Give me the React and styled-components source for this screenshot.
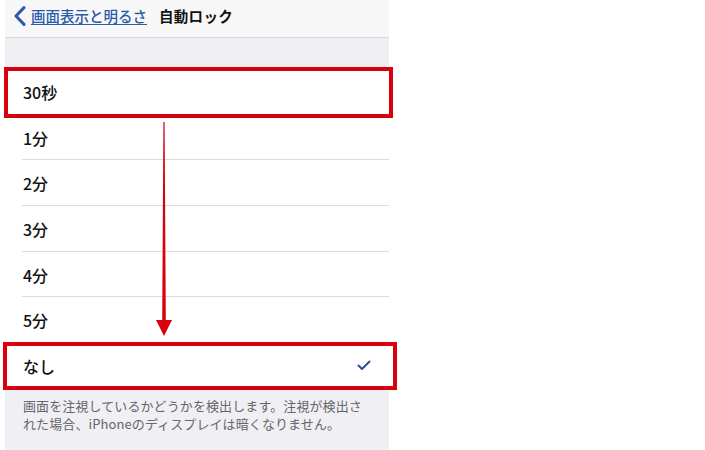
import React from "react";
import styled, { createGlobalStyle } from "styled-components";

const GlobalStyle = createGlobalStyle`
  html, body { margin: 0; padding: 0; background: #ffffff; }
  body {
    font-family: "Noto Sans CJK JP", "Noto Sans", sans-serif;
    -webkit-font-smoothing: antialiased;
  }
`;

const Page = styled.div`
  position: relative;
  width: 705px;
  height: 450px;
  overflow: hidden;
  background: #ffffff;
  padding-left: 5px;
  box-sizing: border-box;
`;

const Screen = styled.div`
  width: 384px;
  height: 450px;
  display: flex;
  flex-direction: column;
  background: #efeff4;
`;

const NavBar = styled.header`
  height: 37px;
  flex: none;
  display: flex;
  align-items: center;
  padding-left: 9px;
  background: #f7f7f7;
  border-bottom: 1px solid #d9d9dc;
`;

const BackLink = styled.a`
  display: flex;
  align-items: center;
  gap: 5px;
  color: #2a5aa8;
  font-size: 14.5px;
  font-weight: 500;
  text-decoration: none;
  margin-top: -6px;
`;

const BackLabel = styled.span`
  text-decoration: underline;
  text-underline-offset: 2px;
  text-decoration-thickness: 1px;
`;

const Title = styled.h1`
  margin: -6px 0 0 12px;
  font-size: 14.5px;
  font-weight: 700;
  color: #111;
  letter-spacing: 0.3px;
`;

const Spacer = styled.div`
  height: 31px;
  flex: none;
`;

const List = styled.ul`
  list-style: none;
  margin: 0;
  padding: 0;
  background: #ffffff;
`;

const Row = styled.li`
  height: 45.7px;
  box-sizing: border-box;
  display: flex;
  align-items: center;
  justify-content: space-between;
  padding: 0 18px 0 18px;
  font-size: 16px;
  font-weight: 500;
  color: #111;
  position: relative;
  &:not(:last-child)::after {
    content: "";
    position: absolute;
    left: 17px;
    right: 0;
    bottom: 0;
    height: 1px;
    background: #dcdcdf;
  }
`;

const Footer = styled.p`
  margin: 0;
  padding: 8px 18px 0 18px;
  font-size: 13px;
  line-height: 18px;
  color: #66666b;
  letter-spacing: 0.1px;
`;

const Highlight = styled.div`
  position: absolute;
  left: ${(p) => p.$left}px;
  top: ${(p) => p.$top}px;
  width: ${(p) => p.$width}px;
  height: ${(p) => p.$height}px;
  box-sizing: border-box;
  border: 4px solid #d8000c;
  pointer-events: none;
`;

const ArrowLayer = styled.svg`
  position: absolute;
  left: 0;
  top: 0;
  pointer-events: none;
`;

const Chevron = () => (
  <svg width="12" height="20" viewBox="0 0 12 20">
    <path
      d="M10 1.6 L2 10 L10 18.4"
      fill="none"
      stroke="#2a5aa8"
      strokeWidth="3"
      strokeLinecap="round"
      strokeLinejoin="round"
    />
  </svg>
);

const Check = () => (
  <svg width="14" height="11" viewBox="0 0 14 11">
    <path
      d="M1.5 5.5 L5 9 L12.5 1.5"
      fill="none"
      stroke="#2c4d9e"
      strokeWidth="2"
      strokeLinecap="round"
      strokeLinejoin="round"
    />
  </svg>
);

const options = ["30秒", "1分", "2分", "3分", "4分", "5分", "なし"];
const selected = "なし";

export default function App() {
  return (
    <>
      <GlobalStyle />
      <Page>
        <Screen>
          <NavBar>
            <BackLink href="#">
              <Chevron />
              <BackLabel>画面表示と明るさ</BackLabel>
            </BackLink>
            <Title>自動ロック</Title>
          </NavBar>
          <Spacer />
          <List>
            {options.map((o) => (
              <Row key={o}>
                <span>{o}</span>
                {o === selected && <Check />}
              </Row>
            ))}
          </List>
          <Footer>
            画面を注視しているかどうかを検出します。注視が検出された場合、iPhoneのディスプレイは暗くなりません。
          </Footer>
        </Screen>

        <Highlight $left={4} $top={67} $width={389} $height={51} />
        <Highlight $left={3} $top={342} $width={394} $height={48} />

        <ArrowLayer width="705" height="450">
          <polygon points="163.4,122 164.6,122 165.8,322 162.2,322" fill="#d8000c" />
          <polygon points="156,320 172,320 164,336" fill="#d8000c" />
        </ArrowLayer>
      </Page>
    </>
  );
}
